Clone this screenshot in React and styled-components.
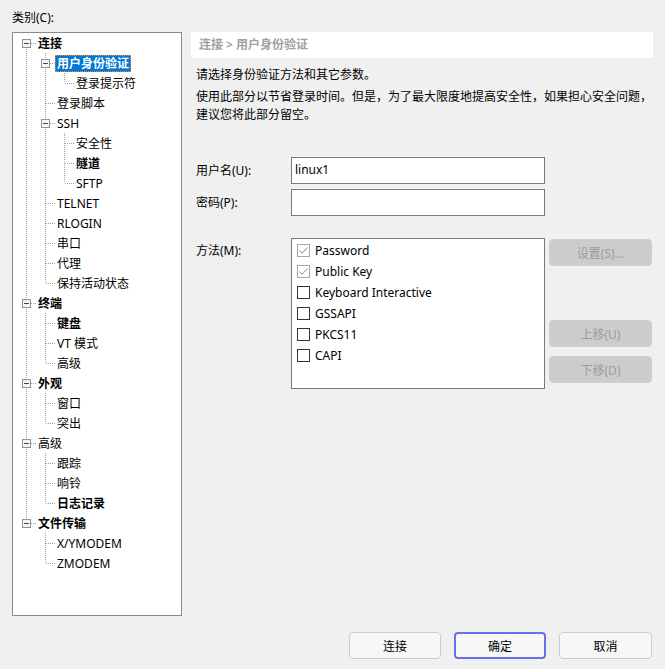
import React from 'react';
import styled, { createGlobalStyle } from 'styled-components';

const GlobalStyle = createGlobalStyle`
  html, body {
    margin: 0;
    padding: 0;
    background: #f0f0f0;
  }
  body {
    font-family: "Noto Sans", "Noto Sans CJK SC", sans-serif;
    font-size: 12px;
    color: #000;
  }
`;

const tree = [
  {
    text: '连接', bold: true, children: [
      { text: '用户身份验证', bold: true, selected: true, children: [{ text: '登录提示符' }] },
      { text: '登录脚本' },
      { text: 'SSH', children: [{ text: '安全性' }, { text: '隧道', bold: true }, { text: 'SFTP' }] },
      { text: 'TELNET' },
      { text: 'RLOGIN' },
      { text: '串口' },
      { text: '代理' },
      { text: '保持活动状态' },
    ],
  },
  { text: '终端', bold: true, children: [{ text: '键盘', bold: true }, { text: 'VT 模式' }, { text: '高级' }] },
  { text: '外观', bold: true, children: [{ text: '窗口' }, { text: '突出' }] },
  { text: '高级', children: [{ text: '跟踪' }, { text: '响铃' }, { text: '日志记录', bold: true }] },
  { text: '文件传输', bold: true, children: [{ text: 'X/YMODEM' }, { text: 'ZMODEM' }] },
];

// walk the tree into flat rows, remembering which ancestor columns still need a pipe
function flatten(nodes, ancestors = [], out = []) {
  nodes.forEach((node, i) => {
    const last = i === nodes.length - 1;
    out.push({
      ...node,
      ancestors,
      up: !(ancestors.length === 0 && i === 0),
      down: !last,
      hasChildren: !!node.children,
    });
    if (node.children) flatten(node.children, [...ancestors, last], out);
  });
  return out;
}

const methods = [
  { label: 'Password', checked: true, locked: true },
  { label: 'Public Key', checked: true, locked: true },
  { label: 'Keyboard Interactive' },
  { label: 'GSSAPI' },
  { label: 'PKCS11' },
  { label: 'CAPI' },
];

function Connector({ up, down, right, box }) {
  const line = { stroke: '#a0a0a0', strokeWidth: 1, strokeDasharray: '1 1', shapeRendering: 'crispEdges' };
  return (
    <svg width="19" height="20" viewBox="0 0 19 20" style={{ flex: 'none' }}>
      {up && <line x1="9.5" y1="0" x2="9.5" y2="10" {...line} />}
      {down && <line x1="9.5" y1="10" x2="9.5" y2="20" {...line} />}
      {right && <line x1={box ? 14 : 10} y1="10.5" x2="19" y2="10.5" {...line} />}
      {box && (
        <g shapeRendering="crispEdges">
          <rect x="5.5" y="6.5" width="8" height="8" fill="#f4f4f4" stroke="#919191" />
          <line x1="7" y1="10.5" x2="12" y2="10.5" stroke="#2c4a8c" />
        </g>
      )}
    </svg>
  );
}

function Check({ checked, locked }) {
  return (
    <CheckBox $color={locked ? '#a8a8a8' : '#333'}>
      {checked && (
        <svg width="11" height="11" viewBox="0 0 11 11">
          <path d="M1.5 5.5 L4.2 8.2 L9.5 2.5" fill="none" stroke="#8c8c8c" strokeWidth="1" />
        </svg>
      )}
    </CheckBox>
  );
}

export default function App() {
  const rows = flatten(tree);
  return (
    <>
      <GlobalStyle />
      <Page>
        <Main>
          <LeftColumn>
            <CategoryLabel>类别(C):</CategoryLabel>
            <TreeBox>
              {rows.map((row, i) => (
                <TreeRow key={i}>
                  {row.ancestors.map((isLast, j) => (
                    <Connector key={j} up={!isLast} down={!isLast} />
                  ))}
                  <Connector up={row.up} down={row.down} right box={row.hasChildren} />
                  <TreeLabel $bold={row.bold} $selected={row.selected}>{row.text}</TreeLabel>
                </TreeRow>
              ))}
            </TreeBox>
          </LeftColumn>

          <RightPanel>
            <Breadcrumb>连接 &gt; 用户身份验证</Breadcrumb>
            <Description>
              <DescLine>请选择身份验证方法和其它参数。</DescLine>
              <DescLine $gap>使用此部分以节省登录时间。但是，为了最大限度地提高安全性，如果担心安全问题，</DescLine>
              <DescLine>建议您将此部分留空。</DescLine>
            </Description>

            <FormRow $top={33}>
              <FieldLabel>用户名(U):</FieldLabel>
              <TextInput defaultValue="linux1" />
            </FormRow>
            <FormRow $top={5}>
              <FieldLabel>密码(P):</FieldLabel>
              <TextInput type="password" defaultValue="" />
            </FormRow>

            <MethodRow>
              <MethodLabel>方法(M):</MethodLabel>
              <ListBox>
                {methods.map((m) => (
                  <CheckRow key={m.label}>
                    <Check checked={m.checked} locked={m.locked} />
                    <span>{m.label}</span>
                  </CheckRow>
                ))}
              </ListBox>
              <SideButtons>
                <SideButton $top={1} disabled>设置(S)...</SideButton>
                <SideButton $top={54} disabled>上移(U)</SideButton>
                <SideButton $top={9} disabled>下移(D)</SideButton>
              </SideButtons>
            </MethodRow>
          </RightPanel>
        </Main>

        <ButtonBar>
          <DialogButton $width={92}>连接</DialogButton>
          <DialogButton $width={92} $primary>确定</DialogButton>
          <DialogButton $width={93}>取消</DialogButton>
        </ButtonBar>
      </Page>
    </>
  );
}

const Page = styled.div`
  width: 665px;
  height: 669px;
  display: flex;
  flex-direction: column;
`;

const Main = styled.div`
  display: flex;
  gap: 9px;
  padding-left: 12px;
`;

const LeftColumn = styled.div`
  width: 170px;
  display: flex;
  flex-direction: column;
`;

const CategoryLabel = styled.div`
  padding-top: 10px;
  line-height: 16px;
  height: 16px;
  margin-bottom: 6px;
`;

const TreeBox = styled.div`
  height: 584px;
  box-sizing: border-box;
  border: 1px solid #8a8a8a;
  background: #fff;
  padding-left: 4px;
`;

const TreeRow = styled.div`
  display: flex;
  align-items: center;
  height: 20px;
`;

const TreeLabel = styled.span`
  padding: 0 1px;
  line-height: 15px;
  white-space: nowrap;
  font-weight: ${(p) => (p.$bold ? 700 : 400)};
  color: ${(p) => (p.$selected ? '#fff' : '#000')};
  background: ${(p) => (p.$selected ? '#0078d7' : 'transparent')};
  border: 1px ${(p) => (p.$selected ? 'dotted #ff8728' : 'solid transparent')};
`;

const RightPanel = styled.div`
  width: 462px;
  margin-top: 32px;
  display: flex;
  flex-direction: column;
`;

const Breadcrumb = styled.div`
  height: 26px;
  line-height: 26px;
  background: #fff;
  padding-left: 8px;
  color: #a0a0a0;
  font-weight: 700;
`;

const Description = styled.div`
  padding-left: 5px;
  margin-top: 8px;
`;

const DescLine = styled.div`
  line-height: 18px;
  white-space: nowrap;
  margin-top: ${(p) => (p.$gap ? '4px' : '0')};
`;

const FormRow = styled.div`
  display: flex;
  align-items: center;
  padding-left: 5px;
  margin-top: ${(p) => p.$top}px;
`;

const FieldLabel = styled.div`
  width: 95px;
  line-height: 16px;
`;

const TextInput = styled.input`
  width: 254px;
  height: 27px;
  box-sizing: border-box;
  border: 1px solid #7a7a7a;
  border-radius: 0;
  background: #fff;
  padding: 0 3px 2px;
  margin: 0;
  font: inherit;
  color: #000;
  outline: none;
`;

const MethodRow = styled.div`
  display: flex;
  align-items: flex-start;
  padding-left: 5px;
  margin-top: 22px;
`;

const MethodLabel = styled.div`
  width: 95px;
  padding-top: 5px;
  line-height: 16px;
`;

const ListBox = styled.div`
  width: 254px;
  height: 151px;
  box-sizing: border-box;
  border: 1px solid #7a7a7a;
  background: #fff;
  padding: 1px 0 0 5px;
`;

const CheckRow = styled.div`
  display: flex;
  align-items: center;
  gap: 5px;
  height: 21px;
  white-space: nowrap;
`;

const CheckBox = styled.span`
  width: 13px;
  height: 13px;
  box-sizing: border-box;
  border: 1px solid ${(p) => p.$color};
  background: #fff;
  display: flex;
  align-items: center;
  justify-content: center;
  flex: none;
`;

const SideButtons = styled.div`
  width: 103px;
  margin-left: 4px;
  display: flex;
  flex-direction: column;
`;

const SideButton = styled.button`
  height: 27px;
  margin-top: ${(p) => p.$top}px;
  border: 1px solid #cfcfcf;
  border-radius: 4px;
  background: #cccccc;
  color: #9c9c9c;
  font: inherit;
  padding: 0;
`;

const ButtonBar = styled.div`
  display: flex;
  justify-content: flex-end;
  gap: 13px;
  padding-right: 13px;
  margin-top: 16px;
`;

const DialogButton = styled.button`
  width: ${(p) => p.$width}px;
  height: 27px;
  box-sizing: border-box;
  border: ${(p) => (p.$primary ? '2px solid #6b70e4' : '1px solid #cdcdcd')};
  border-radius: 4px;
  background: #f7f7f7;
  color: #000;
  font: inherit;
  padding: 0;
`;
